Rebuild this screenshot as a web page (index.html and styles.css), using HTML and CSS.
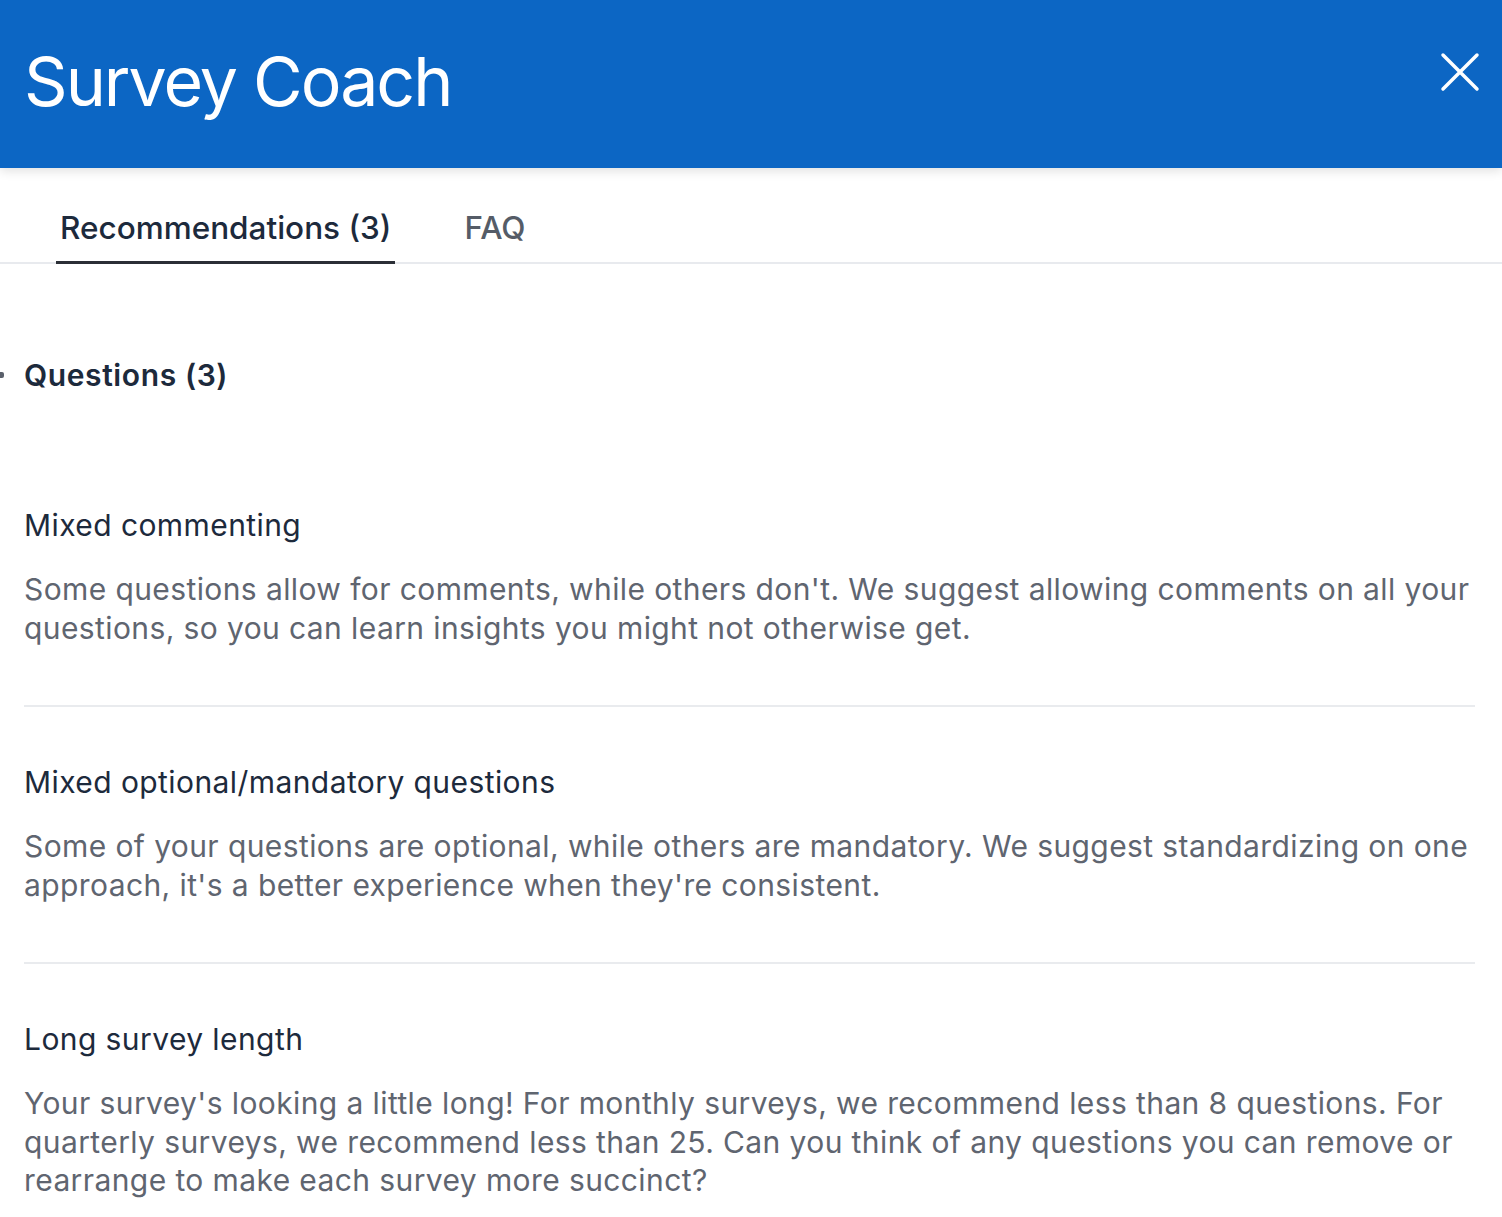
FILE: index.html
```html
<!DOCTYPE html>
<html>
<head>
<meta charset="utf-8">
<link rel="stylesheet" href="styles.css">
</head>
<body>
<div class="panel">
  <header class="header">
    <h1 class="title">Survey Coach</h1>
    <button class="close" aria-label="Close">
      <svg width="40" height="40" viewBox="0 0 40 40"><path d="M3 3 L37 37 M37 3 L3 37" stroke="#fff" stroke-width="3.5" stroke-linecap="round"/></svg>
    </button>
  </header>
  <nav class="tabs">
    <div class="tab active">Recommendations (3)</div>
    <div class="tab">FAQ</div>
  </nav>
  <main class="content">
    <div class="group-head">
      <span class="chev"></span>
      <h2 class="group-title">Questions (3)</h2>
    </div>
    <section class="rec">
      <h3 class="rec-title">Mixed commenting</h3>
      <p class="rec-body">Some questions allow for comments, while others don't. We suggest allowing comments on all your questions, so you can learn insights you might not otherwise get.</p>
    </section>
    <section class="rec">
      <h3 class="rec-title">Mixed optional/mandatory questions</h3>
      <p class="rec-body">Some of your questions are optional, while others are mandatory. We suggest standardizing on one approach, it's a better experience when they're consistent.</p>
    </section>
    <section class="rec last">
      <h3 class="rec-title">Long survey length</h3>
      <p class="rec-body">Your survey's looking a little long! For monthly surveys, we recommend less than 8 questions. For quarterly surveys, we recommend less than 25. Can you think of any questions you can remove or rearrange to make each survey more succinct?</p>
    </section>
  </main>
</div>
</body>
</html>
```

FILE: styles.css
```css
* { box-sizing: border-box; }
html, body { margin: 0; padding: 0; background: #fff; }
body { font-family: Inter, "Liberation Sans", sans-serif; width: 1502px; height: 1217px; overflow: hidden; }
.panel { position: relative; }
.header {
  height: 168px;
  background: #0c66c4;
  display: flex;
  align-items: center;
  justify-content: space-between;
  padding: 0 22px 0 24px;
  box-shadow: 0 3px 10px rgba(0,0,0,0.12);
  position: relative;
  z-index: 2;
}
.title {
  margin: 0;
  color: #fff;
  font-weight: 400;
  font-size: 68px;
  letter-spacing: -2px;
  line-height: 1;
  padding-bottom: 6px;
}
.close {
  background: none; border: 0; padding: 0; margin-top: -24px;
  width: 40px; height: 40px; display: block;
}
.tabs {
  display: flex;
  height: 96px;
  border-bottom: 2px solid #e8eaee;
  padding-left: 56px;
  gap: 65px;
  align-items: stretch;
}
.tab {
  font-size: 31.5px;
  font-weight: 500;
  color: #555c67;
  display: flex;
  align-items: center;
  padding: 26px 4px 0;
  margin-bottom: -2px;
  border-bottom: 3px solid transparent;
}
.tab.active {
  color: #1d2a3c;
  border-bottom-color: #2b2f36;
}
.content { padding: 0 27px 0 24px; }
.group-head {
  position: relative;
  height: 130px;
  display: flex;
  align-items: flex-end;
}
.chev {
  position: absolute;
  left: -24px;
  top: 108px;
  width: 4px; height: 6px;
  background: #5a606b;
  border-radius: 0 2px 2px 0;
}
.group-title {
  margin: 0;
  font-size: 30px;
  font-weight: 600;
  letter-spacing: 0.6px;
  color: #1d2a3c;
  line-height: 38px;
}
.rec {
  padding-top: 112px;
  padding-bottom: 58px;
  border-bottom: 2px solid #e9ebee;
}
.rec + .rec { padding-top: 56px; }
.rec.last { border-bottom: 0; }
.rec-title {
  margin: 0 0 26px;
  font-size: 30px;
  font-weight: 400;
  letter-spacing: 0.42px;
  color: #1d2a3c;
  line-height: 38px;
}
.rec-body {
  margin: 0;
  font-size: 30px;
  letter-spacing: 0.4px;
  line-height: 38.5px;
  color: #5f6570;
}
```
